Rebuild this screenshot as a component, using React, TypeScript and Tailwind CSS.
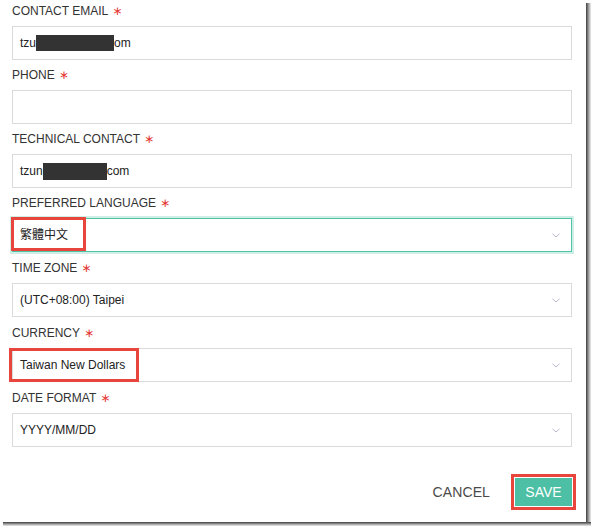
import React from "react";

const FONT = { fontFamily: '"Liberation Sans", Arial, "Noto Sans CJK TC", sans-serif' };

function Label({ text, first }: { text: string; first?: boolean }) {
  return (
    <div
      className={`${first ? "" : "mt-[7px]"} mb-[7px] h-[16px] text-[12px] leading-[16px] text-[#333] flex items-center`}
    >
      <span>{text}</span>
      <span className="ml-[4px] text-[#e53935] text-[12px]" style={{ fontFamily: '"DejaVu Sans", sans-serif' }}>
        ∗
      </span>
    </div>
  );
}

function Chevron() {
  return (
    <svg width="8" height="5" viewBox="0 0 8 5" className="shrink-0">
      <polyline points="0.5,0.8 4,4 7.5,0.8" fill="none" stroke="#b9b9cf" strokeWidth="1" />
    </svg>
  );
}

function Box({
  children,
  select,
  focused,
  extra,
}: {
  children?: React.ReactNode;
  select?: boolean;
  focused?: boolean;
  extra?: boolean;
}) {
  return (
    <div
      className={`relative h-[34px] w-[560px] flex items-center pl-[7px] pr-[11px] text-[12px] text-[#222] border ${
        focused ? "border-[#52c1a5] shadow-[0_0_0_2px_#cfeee6]" : "border-[#dadada]"
      } ${extra ? "mb-[1px]" : ""}`}
    >
      <div className="flex-1 flex items-center">{children}</div>
      {select && <Chevron />}
    </div>
  );
}

export default function App() {
  return (
    <div className="w-[591px] h-[526px] bg-white flex flex-col" style={FONT}>
      <div className="flex h-[522px]">
        <div className="w-[586px] h-[522px] pl-[12px] pt-[3px] flex flex-col">
          <Label text="CONTACT EMAIL" first />
          <Box>
            <span>tzu</span>
            <span className="inline-block w-[78px] h-[16px] bg-[#333]" />
            <span>om</span>
          </Box>

          <Label text="PHONE" />
          <Box />

          <Label text="TECHNICAL CONTACT" />
          <Box>
            <span>tzun</span>
            <span className="inline-block w-[64px] h-[17px] bg-[#333]" />
            <span>com</span>
          </Box>

          <Label text="PREFERRED LANGUAGE" />
          <div className="relative">
            <Box select focused extra>
              <span>繁體中文</span>
            </Box>
            <div className="absolute left-[-1px] top-[-1px] w-[75px] h-[34px] border-[3px] border-[#e8453c]" />
          </div>

          <Label text="TIME ZONE" />
          <Box select extra>
            <span>(UTC+08:00) Taipei</span>
          </Box>

          <Label text="CURRENCY" />
          <div className="relative">
            <Box select extra>
              <span>Taiwan New Dollars</span>
            </Box>
            <div className="absolute left-[-3px] top-0 w-[130px] h-[34px] border-[3px] border-[#e8453c]" />
          </div>

          <Label text="DATE FORMAT" />
          <Box select extra>
            <span>YYYY/MM/DD</span>
          </Box>

          <div className="mt-[26px] w-[564px] flex items-center justify-end gap-[21px]">
            <span className="text-[14px] text-[#4a4a4a] tracking-[0.1px]">CANCEL</span>
            <div className="border-[3px] border-[#e8453c] p-[1px]">
              <div className="w-[57px] h-[28px] bg-[#4cbfa4] text-white text-[14px] flex items-center justify-center">
                SAVE
              </div>
            </div>
          </div>
        </div>
        <div className="w-[5px] h-[522px] pt-[3px]">
          <div className="w-full h-full bg-gradient-to-r from-[#3e3e3e] via-[#9a9a9a] to-[#eeeeee]" />
        </div>
      </div>
      <div className="h-[4px] pl-[3px]">
        <div className="w-full h-full bg-gradient-to-b from-[#3e3e3e] via-[#9a9a9a] to-[#eeeeee]" />
      </div>
    </div>
  );
}
